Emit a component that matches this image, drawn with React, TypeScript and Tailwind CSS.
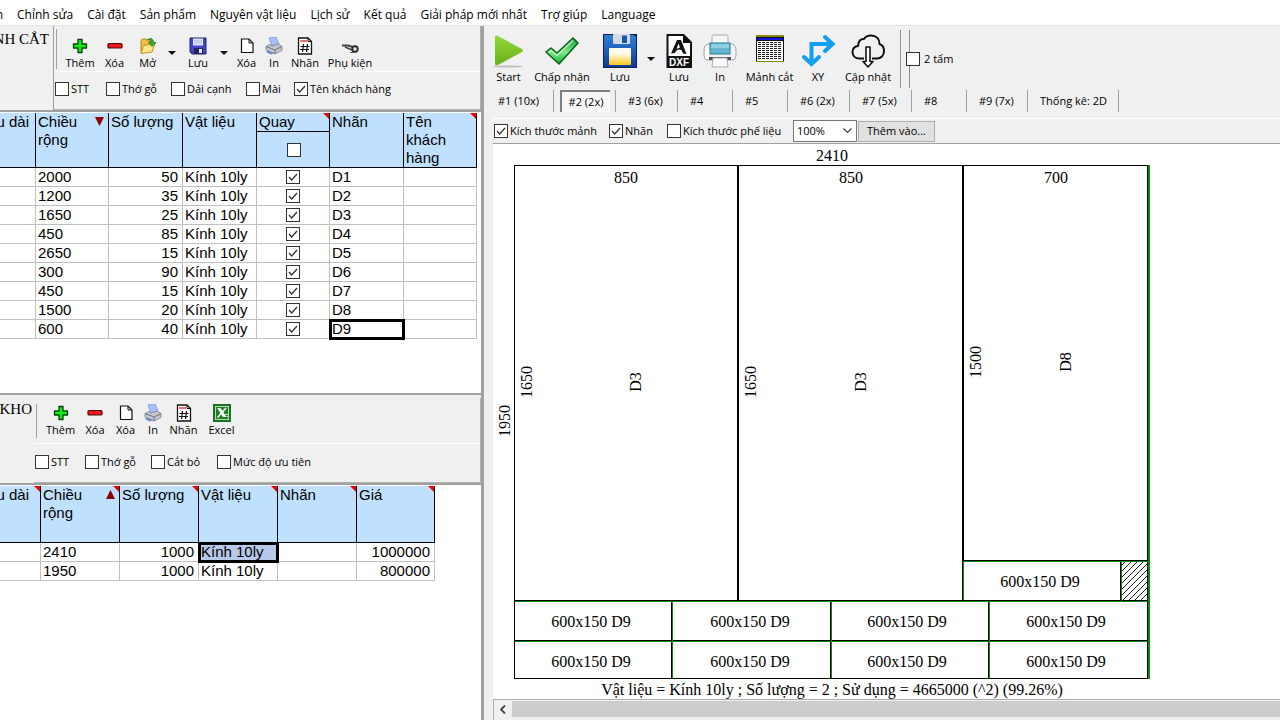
import type { ReactNode } from "react";
import { clsx } from "clsx";

const menuItems = [
  "Chỉnh sửa",
  "Cài đặt",
  "Sản phẩm",
  "Nguyên vật liệu",
  "Lịch sử",
  "Kết quả",
  "Giải pháp mới nhất",
  "Trợ giúp",
  "Language",
];

const pieces = [
  { width: 2000, count: 50, label: "D1" },
  { width: 1200, count: 35, label: "D2" },
  { width: 1650, count: 25, label: "D3" },
  { width: 450, count: 85, label: "D4" },
  { width: 2650, count: 15, label: "D5" },
  { width: 300, count: 90, label: "D6" },
  { width: 450, count: 15, label: "D7" },
  { width: 1500, count: 20, label: "D8" },
  { width: 600, count: 40, label: "D9" },
];

const stock = [
  { width: 2410, count: 1000, price: 1000000, selected: true },
  { width: 1950, count: 1000, price: 800000, selected: false },
];

const sheetTabs = [
  { text: "#1 (10x)", size: "w-[61px]" },
  { text: "#2 (2x)", size: "w-[62px]", active: true },
  { text: "#3 (6x)", size: "w-[62px]" },
  { text: "#4", size: "w-[55px]" },
  { text: "#5", size: "w-[55px]" },
  { text: "#6 (2x)", size: "w-[62px]" },
  { text: "#7 (5x)", size: "w-[62px]" },
  { text: "#8", size: "w-[55px]" },
  { text: "#9 (7x)", size: "w-[61px]" },
  { text: "Thống kê: 2D", size: "w-[91px]" },
];

/* ---------- small icons ---------- */

const PlusIcon = () => (
  <svg width="16" height="16" viewBox="0 0 16 16">
    <path d="M6 1.500h4V6h4.500v4H10v4.500H6V10H1.500V6H6z" fill="#10f010" stroke="#064006" strokeWidth="1.300" strokeLinejoin="round" />
  </svg>
);

const MinusIcon = () => (
  <svg width="16" height="16" viewBox="0 0 16 16">
    <rect x="1" y="5.500" width="14" height="4.500" rx="1" fill="#f01818" stroke="#500808" strokeWidth="1.200" />
  </svg>
);

const OpenIcon = () => (
  <svg width="18" height="18" viewBox="0 0 18 18">
    <path d="M2 15.500V4l1.500-2H7l1.500 2H14v4" fill="#f3c04a" stroke="#b98512" />
    <path d="M2 16.500 4.500 8.500 16 6l-3 9z" fill="#ffe68a" stroke="#c2901c" />
    <path d="M8.500 2.500c3.500-2 6-.5 6 3H17l-4 4-3.500-4H12c0-1.500-1-3-3.500-3z" fill="#35b02f" stroke="#1b6e1b" strokeWidth=".7" />
  </svg>
);

const FloppySmallIcon = () => (
  <svg width="18" height="18" viewBox="0 0 18 18">
    <path d="M1 1h16v16H3l-2-2z" fill="#4343c8" stroke="#22226e" />
    <rect x="4" y="1.500" width="10" height="7" fill="#dfe6fb" />
    <path d="M5 4h8M5 6h8" stroke="#a9b6e8" />
    <rect x="5" y="11" width="9" height="6" fill="#25255e" />
    <rect x="10" y="12" width="3" height="4" fill="#e3e3f2" />
  </svg>
);

const PageIcon = () => (
  <svg width="16" height="16" viewBox="0 0 16 16">
    <path d="M2.500 1h7.500l4 4v9.500H2.500z" fill="#fff" stroke="#111" strokeWidth="1.200" />
    <path d="M10 1v4h4" fill="none" stroke="#111" />
  </svg>
);

const PrinterSmallIcon = () => (
  <svg width="18" height="18" viewBox="0 0 18 18">
    <path d="m4 1 7-1 3 7-7 2z" fill="#a9bffa" stroke="#7d92d8" strokeWidth=".8" />
    <path d="m1 9.500 4-2 2 1.500 6-2 4 2.500v4l-7 3.500-9-4z" fill="#c5c8d2" stroke="#777d8d" strokeWidth=".8" />
    <path d="m1 9.500 9 3.500 7-3.500M10 13v4" fill="none" stroke="#6a7080" />
    <path d="m3 13.500 6 2.500-3 1.500-5-2.500z" fill="#6f83cb" />
    <circle cx="15" cy="11.500" r=".8" fill="#d8a820" />
  </svg>
);

const LabelIcon = () => (
  <svg width="18" height="18" viewBox="0 0 18 18">
    <path d="M2.500 1h9.500l3.500 3.500V17h-13z" fill="#fff" stroke="#111" strokeWidth="1.300" />
    <path d="M4 4h7" stroke="#e01010" strokeWidth="1.200" />
    <path d="M12 1v3.500h3.500" fill="none" stroke="#111" />
    <path d="m7.500 7-1 8M11.500 7l-1 8M4.500 9.500h9M4 12.500h9" stroke="#111" strokeWidth="1.200" />
  </svg>
);

const HingeIcon = () => (
  <svg width="18" height="18" viewBox="0 0 18 18">
    <path d="M1 8.500h6l5 1.500" fill="none" stroke="#444" strokeWidth="2" />
    <path d="m4 10 7 3" stroke="#444" strokeWidth="1.600" />
    <circle cx="14" cy="12" r="3" fill="#999" stroke="#222" strokeWidth="1.400" />
    <circle cx="14" cy="12" r="1" fill="#fff" />
    <path d="M9 15.500h4" stroke="#555" />
  </svg>
);

const ExcelIcon = () => (
  <svg width="18" height="18" viewBox="0 0 18 18">
    <rect x="1" y="1" width="16" height="16" fill="#b9d6b9" stroke="#17761c" strokeWidth="2" />
    <rect x="3" y="3" width="12" height="12" fill="#1f7f25" />
    <path d="M4 4h3.500l6 9H10z" fill="#fff" />
    <path d="M13 4 4.500 13.500" stroke="#fff" strokeWidth="1.600" />
    <path d="M12 10.500h3M13.500 12.500H15" stroke="#bfe0bf" />
  </svg>
);

const DownArrow = () => (
  <svg width="8" height="4" viewBox="0 0 8 4">
    <path d="M0 0h8L4 4z" fill="#111" />
  </svg>
);

/* ---------- large icons ---------- */

const StartIcon = () => (
  <svg width="32" height="34" viewBox="0 0 32 34">
    <defs>
      <linearGradient id="start" x1="0" y1="0" x2="0" y2="1">
        <stop offset="0" stopColor="#93d83c" />
        <stop offset="1" stopColor="#67b11a" />
      </linearGradient>
    </defs>
    <ellipse cx="15" cy="32.500" rx="15" ry="1" fill="#bdbdbd" />
    <path d="M2 2.500Q2 1 4 1.500L29 15q2 1.500 0 3L5 31q-3 1-3-1z" fill="url(#start)" />
  </svg>
);

const AcceptIcon = () => (
  <svg width="36" height="32" viewBox="0 0 36 32">
    <defs>
      <linearGradient id="accept" x1="0" y1="0" x2="0" y2="1">
        <stop offset="0" stopColor="#149c35" />
        <stop offset=".55" stopColor="#7fe98a" />
        <stop offset="1" stopColor="#12b22e" />
      </linearGradient>
    </defs>
    <path d="m2 17 5-4 6 5L29 3l5 5-19 21z" fill="url(#accept)" stroke="#0c6422" strokeWidth="1.600" strokeLinejoin="round" />
    <path d="m5 17 2-1.500 6 5L29 5.500" fill="none" stroke="#c4f5c4" strokeWidth="1.200" />
  </svg>
);

const FloppyIcon = () => (
  <svg width="34" height="34" viewBox="0 0 34 34">
    <defs>
      <linearGradient id="floppy" x1="0" y1="0" x2="0" y2="1">
        <stop offset="0" stopColor="#2f80d6" />
        <stop offset="1" stopColor="#0a3b98" />
      </linearGradient>
      <linearGradient id="paper" x1="0" y1="0" x2="0" y2="1">
        <stop offset=".3" stopColor="#fffdf2" />
        <stop offset="1" stopColor="#ffc61e" />
      </linearGradient>
    </defs>
    <path d="M0 0h34v34H0z" fill="#10204a" />
    <path d="M1 1h30l2 2v30H1z" fill="url(#floppy)" />
    <rect x="10" y="0" width="17" height="10" rx="1" fill="#d5dbe3" />
    <rect x="19" y="1.500" width="5" height="7.500" fill="#1b57ad" />
    <rect x="6" y="14" width="22" height="17" rx="1" fill="url(#paper)" />
  </svg>
);

const DxfIcon = () => (
  <svg width="26" height="34" viewBox="0 0 26 34">
    <path d="M1.500 1h16L25 8.500V33H1.500z" fill="#fff" stroke="#111" strokeWidth="2" />
    <path d="M17 0v9h9z" fill="#111" />
    <path d="M5 19.500 11 6h4l5.500 14-3.500-.5-1.500-3.500c-3-1.500-5.500 0-6.500 3z" fill="#111" />
    <path d="m12.500 9.500 1.500 4-3.500 1.500z" fill="#fff" />
    <rect x="1" y="22" width="24" height="12" fill="#111" />
    <text x="13" y="32" textAnchor="middle" fontFamily="Liberation Sans, sans-serif" fontWeight="700" fontSize="10" fill="#fff">DXF</text>
  </svg>
);

const PrinterIcon = () => (
  <svg width="34" height="34" viewBox="0 0 34 34">
    <rect x="9" y="1" width="16" height="10" rx="1" fill="#f7f7f7" stroke="#a9abb0" />
    <path d="M5 10h24q4 1 4 7v5q0 3-3 4H4q-3-1-3-4v-5q0-6 4-7z" fill="#eff1f3" stroke="#a3a6ac" />
    <path d="M4.500 11Q2 13 2 18v4q0 2 2 3h2V11z" fill="#fff" />
    <rect x="7" y="9" width="20" height="11" fill="#62b5cd" stroke="#2c7f99" />
    <path d="M8 10h18v4H8z" fill="#8fd0e0" />
    <path d="M6 24.500h22" stroke="#4a4e55" strokeWidth="3" />
    <path d="M10 24h14l1 9H9z" fill="#fafafa" stroke="#a9abb0" />
  </svg>
);

const GridIcon = () => (
  <svg width="28" height="34" viewBox="0 0 28 34">
    <rect x="0" y="1" width="28" height="27" fill="#111" />
    <rect x="0" y="1" width="28" height="2" fill="#8b8b10" />
    <rect x="1" y="4" width="26" height="2" fill="#1616e0" />
    <rect x="1" y="7" width="26" height="20" fill="#fff" />
    <path
      d="M2 8.500h24M2 10.500h24M2 12.500h24M2 14.500h24M2 16.500h24M2 18.500h24M2 20.500h24M2 22.500h24M2 24.500h24"
      stroke="#222"
      strokeDasharray="3 1"
    />
    <path d="M0 27.500h28" stroke="#8b8b10" />
  </svg>
);

const AxesIcon = () => (
  <svg width="34" height="34" viewBox="0 0 34 34" fill="none" stroke="#0f9fee" strokeWidth="4">
    <path d="M10.500 29V10H31" />
    <path d="m24 3 7.500 7-7.500 7M3 23l7.500 7 7.500-7" strokeLinecap="round" />
  </svg>
);

const CloudIcon = () => (
  <svg width="34" height="34" viewBox="0 0 34 34" strokeLinejoin="round">
    <path
      d="M13 24.500H8.500C4 24.500 1.500 21.500 1.500 18s2.500-5.500 5.500-6C7 7 10 4.500 13 5c1.500-2.500 4-3.500 7-3.500C25.500 1.500 28.500 5 28.500 10c3 1 4.500 3.500 4.500 7 0 4.500-3 7.500-7 7.500h-5"
      fill="none"
      stroke="#111"
      strokeWidth="2"
    />
    <path d="M15 13h4v14.500h3L17 33l-5-5.500h3z" fill="#fff" stroke="#111" strokeWidth="1.600" />
  </svg>
);

/* ---------- controls ---------- */

function CheckMark() {
  return (
    <svg className="pointer-events-none absolute inset-0" width="14" height="14" viewBox="0 0 14 14">
      <path d="m3 7 2.700 3L11 4" fill="none" stroke="#333" strokeWidth="1.300" />
    </svg>
  );
}

function Tick({ checked = false, label }: { checked?: boolean; label?: string }) {
  return (
    <span className="relative block size-[14px] shrink-0">
      <input
        type="checkbox"
        defaultChecked={checked}
        aria-label={label}
        className="block size-[14px] appearance-none border border-[#333] bg-white"
      />
      {checked && <CheckMark />}
    </span>
  );
}

function Check({ children, checked, className }: { children: ReactNode; checked?: boolean; className?: string }) {
  return (
    <label className={clsx("flex shrink-0 items-center gap-[2px] whitespace-nowrap", className)}>
      <Tick checked={checked} />
      {children}
    </label>
  );
}

function ToolButton({ icon, text, size, large }: { icon: ReactNode; text: string; size: string; large?: boolean }) {
  return (
    <button className={clsx("flex shrink-0 flex-col items-center whitespace-nowrap", size)}>
      <span className={clsx("flex items-center justify-center", large ? "h-[34px]" : "h-[18px]")}>{icon}</span>
      <span className={large ? "mt-px" : ""}>{text}</span>
    </button>
  );
}

function DropButton({ label, size, large }: { label: string; size: string; large?: boolean }) {
  return (
    <button aria-label={label} className={clsx("flex shrink-0 justify-center", size, large ? "pt-[23px]" : "pt-[14px]")}>
      <DownArrow />
    </button>
  );
}

function HeadCell({ children, corner, sort }: { children?: ReactNode; corner?: boolean; sort?: "up" | "down" }) {
  return (
    <th className="relative border-r border-b border-black bg-[#c0e0ff] p-0 pl-[2px] text-left align-top font-normal">
      {children}
      {corner && (
        <svg className="absolute top-0 right-0" width="6" height="6" viewBox="0 0 6 6">
          <path d="M0 0h6v6z" fill="#f00000" />
        </svg>
      )}
      {sort && (
        <svg className="absolute top-1 right-1" width="9" height="9" viewBox="0 0 9 9">
          <path d={sort === "up" ? "M0 9h9L4.500 0z" : "M0 0h9L4.500 9z"} fill="#8b0000" />
        </svg>
      )}
    </th>
  );
}

const cell = "h-[19px] border-r border-b border-[#c0c0c0] p-0 px-[2px] whitespace-nowrap";

function PiecesTable() {
  return (
    <table className="w-[477px] table-fixed border-separate border-spacing-0 font-['Liberation_Sans',sans-serif] text-[15px] leading-[18px]">
      <colgroup>
        <col className="w-[36px]" />
        <col className="w-[73px]" />
        <col className="w-[74px]" />
        <col className="w-[74px]" />
        <col className="w-[73px]" />
        <col className="w-[74px]" />
        <col className="w-[73px]" />
      </colgroup>
      <thead>
        <tr className="h-[55px]">
          <HeadCell>
            <span className="-ml-[2px] flex w-[29px] justify-end overflow-hidden whitespace-nowrap">u dài</span>
          </HeadCell>
          <HeadCell sort="down">Chiều<br />rộng</HeadCell>
          <HeadCell>Số lượng</HeadCell>
          <HeadCell>Vật liệu</HeadCell>
          <HeadCell corner>
            <div className="-ml-[2px] border-b border-black pl-[2px]">Quay</div>
            <div className="flex h-[35px] items-center justify-center">
              <Tick label="Quay tất cả" />
            </div>
          </HeadCell>
          <HeadCell>Nhãn</HeadCell>
          <HeadCell corner>
            <div className="h-[54px] overflow-hidden">Tên<br />khách<br />hàng</div>
          </HeadCell>
        </tr>
      </thead>
      <tbody>
        {pieces.map((piece) => (
          <tr key={piece.label}>
            <td className={cell} />
            <td className={cell}>{piece.width}</td>
            <td className={clsx(cell, "pr-1 text-right")}>{piece.count}</td>
            <td className={cell}>Kính 10ly</td>
            <td className={cell}>
              <div className="flex justify-center">
                <Tick checked label={`Quay ${piece.label}`} />
              </div>
            </td>
            <td className={clsx(cell, piece.label === "D9" && "outline-3 -outline-offset-2 outline-black")}>{piece.label}</td>
            <td className={cell} />
          </tr>
        ))}
      </tbody>
    </table>
  );
}

function StockTable() {
  return (
    <table className="w-[435px] table-fixed border-separate border-spacing-0 font-['Liberation_Sans',sans-serif] text-[15px] leading-[18px]">
      <colgroup>
        <col className="w-[41px]" />
        <col className="w-[79px]" />
        <col className="w-[79px]" />
        <col className="w-[79px]" />
        <col className="w-[79px]" />
        <col className="w-[78px]" />
      </colgroup>
      <thead>
        <tr className="h-[57px]">
          <HeadCell corner>
            <span className="-ml-[2px] flex w-[29px] justify-end overflow-hidden whitespace-nowrap">u dài</span>
          </HeadCell>
          <HeadCell sort="up" corner>Chiều<br />rộng</HeadCell>
          <HeadCell corner>Số lượng</HeadCell>
          <HeadCell corner>Vật liệu</HeadCell>
          <HeadCell corner>Nhãn</HeadCell>
          <HeadCell corner>Giá</HeadCell>
        </tr>
      </thead>
      <tbody>
        {stock.map((row) => (
          <tr key={row.width}>
            <td className={cell} />
            <td className={cell}>{row.width}</td>
            <td className={clsx(cell, "pr-1 text-right")}>{row.count}</td>
            <td className={clsx(cell, row.selected && "bg-[#b8c8e8] outline-3 -outline-offset-2 outline-black")}>Kính 10ly</td>
            <td className={cell} />
            <td className={clsx(cell, "pr-1 text-right")}>{row.price}</td>
          </tr>
        ))}
      </tbody>
    </table>
  );
}

/* ---------- cutting plan ---------- */

const stripCells = [
  { x: 98, y: 483 },
  { x: 257, y: 483 },
  { x: 414, y: 483 },
  { x: 573, y: 483 },
  { x: 98, y: 523 },
  { x: 257, y: 523 },
  { x: 414, y: 523 },
  { x: 573, y: 523 },
  { x: 547, y: 443 },
];

const sideTexts = [
  { x: 17, y: 277, text: "1950" },
  { x: 39, y: 238, text: "1650" },
  { x: 263, y: 238, text: "1650" },
  { x: 488, y: 218, text: "1500" },
  { x: 148, y: 238, text: "D3" },
  { x: 373, y: 238, text: "D3" },
  { x: 578, y: 218, text: "D8" },
];

function CuttingPlan() {
  return (
    <svg width="700" height="555" viewBox="0 0 700 555" className="block" fontFamily="Liberation Serif, serif" fontSize="16" textAnchor="middle">
      <defs>
        <pattern id="waste" width="6" height="6" patternUnits="userSpaceOnUse">
          <path d="M-1 7 7-1M-1 1l2-2M5 7l2-2" stroke="#222" strokeWidth="1" />
        </pattern>
      </defs>
      <rect x="628" y="417" width="27" height="40" fill="url(#waste)" />
      <g fill="#000" shapeRendering="crispEdges">
        <rect x="21" y="21" width="636" height="1" />
        <rect x="21" y="21" width="1" height="514" />
        <rect x="21" y="534" width="636" height="1" />
        <rect x="654" y="21" width="1" height="514" />
        <rect x="244" y="21" width="2" height="435" />
        <rect x="469" y="21" width="2" height="435" />
        <rect x="21" y="456" width="634" height="1" />
        <rect x="21" y="496" width="634" height="1" />
        <rect x="471" y="416" width="184" height="1" />
        <rect x="627" y="416" width="1" height="40" />
        <rect x="178" y="457" width="1" height="78" />
        <rect x="337" y="457" width="1" height="78" />
        <rect x="495" y="457" width="1" height="78" />
      </g>
      <g fill="#0a8a0a" shapeRendering="crispEdges">
        <rect x="655" y="21" width="2" height="514" />
        <rect x="22" y="457" width="633" height="1" />
        <rect x="22" y="497" width="633" height="1" />
        <rect x="471" y="417" width="184" height="1" />
        <rect x="470" y="417" width="1" height="39" />
        <rect x="628" y="417" width="1" height="40" />
        <rect x="179" y="457" width="1" height="77" />
        <rect x="338" y="457" width="1" height="77" />
        <rect x="496" y="457" width="1" height="77" />
      </g>
      <text x="339" y="17">2410</text>
      <text x="133" y="39">850</text>
      <text x="358" y="39">850</text>
      <text x="563" y="39">700</text>
      {sideTexts.map((t) => (
        <text key={`${t.text}-${t.x}`} transform={`translate(${t.x} ${t.y}) rotate(-90)`}>{t.text}</text>
      ))}
      {stripCells.map((c) => (
        <text key={`${c.x}-${c.y}`} x={c.x} y={c.y}>600x150 D9</text>
      ))}
      <text x="339" y="551">Vật liệu = Kính 10ly ; Số lượng = 2 ; Sử dụng = 4665000 (^2) (99.26%)</text>
    </svg>
  );
}

function LeftPane() {
  return (
    <section className="flex w-[481px] shrink-0 flex-col overflow-hidden">
      <div className="flex h-[86px] border-b-2 border-[#a0a0a0]">
        <h2 className="flex w-[54px] shrink-0 justify-end overflow-hidden border-r border-[#a0a0a0] pt-1 pr-1 font-['Liberation_Serif',serif] text-[15px] leading-[18px] whitespace-nowrap">
          NH CẮT
        </h2>
        <div className="flex min-w-0 flex-1 flex-col border-r border-b border-[#b0b0b0]">
          <div className="flex h-[46px] border-b border-white pt-[11px]">
            <span className="-mt-2 mr-[6px] ml-[2px] h-[40px] w-px shrink-0 bg-[#a0a0a0]" />
            <ToolButton icon={<PlusIcon />} text="Thêm" size="w-[34px]" />
            <ToolButton icon={<MinusIcon />} text="Xóa" size="w-[35px]" />
            <ToolButton icon={<OpenIcon />} text="Mở" size="w-[31px]" />
            <DropButton label="Mở gần đây" size="w-[18px]" />
            <ToolButton icon={<FloppySmallIcon />} text="Lưu" size="w-[34px]" />
            <DropButton label="Kiểu lưu" size="w-[18px]" />
            <ToolButton icon={<PageIcon />} text="Xóa" size="w-[27px]" />
            <ToolButton icon={<PrinterSmallIcon />} text="In" size="w-[28px]" />
            <ToolButton icon={<LabelIcon />} text="Nhãn" size="w-[34px]" />
            <ToolButton icon={<HingeIcon />} text="Phụ kiện" size="w-[56px]" />
          </div>
          <div className="flex flex-1 items-center pb-[3px] pl-px">
            <Check className="w-[51px]">STT</Check>
            <Check className="w-[65px]">Thớ gỗ</Check>
            <Check className="w-[75px]">Dải cạnh</Check>
            <Check className="w-[48px]">Mài</Check>
            <Check checked>Tên khách hàng</Check>
          </div>
        </div>
      </div>
      <div className="h-[281px] bg-white pt-px">
        <PiecesTable />
      </div>
      <div className="h-[5px] border-t-2 border-[#a0a0a0]" />
      <div className="flex h-[87px] border-b-2 border-[#a0a0a0]">
        <h2 className="flex w-[34px] shrink-0 justify-end overflow-hidden pt-[2px] pr-[2px] font-['Liberation_Serif',serif] text-[15px] leading-[18px] whitespace-nowrap">
          KHO
        </h2>
        <div className="flex min-w-0 flex-1 flex-col border-r border-b border-[#b0b0b0]">
          <div className="flex h-[46px] border-b border-white pt-[6px]">
            <span className="mr-[6px] ml-[2px] h-[34px] w-px shrink-0 bg-[#a0a0a0]" />
            <ToolButton icon={<PlusIcon />} text="Thêm" size="w-[35px]" />
            <ToolButton icon={<MinusIcon />} text="Xóa" size="w-[34px]" />
            <ToolButton icon={<PageIcon />} text="Xóa" size="w-[27px]" />
            <ToolButton icon={<PrinterSmallIcon />} text="In" size="w-[28px]" />
            <ToolButton icon={<LabelIcon />} text="Nhãn" size="w-[33px]" />
            <ToolButton icon={<ExcelIcon />} text="Excel" size="w-[43px]" />
          </div>
          <div className="flex flex-1 items-center pb-[3px] pl-px">
            <Check className="w-[50px]">STT</Check>
            <Check className="w-[66px]">Thớ gỗ</Check>
            <Check className="w-[66px]">Cắt bỏ</Check>
            <Check>Mức độ ưu tiên</Check>
          </div>
        </div>
      </div>
      <div className="min-h-0 flex-1 bg-white pt-px">
        <StockTable />
      </div>
    </section>
  );
}

function RightPane() {
  return (
    <section className="flex min-w-0 flex-1 flex-col">
      <div className="flex h-[62px] shrink-0 pt-2">
        <ToolButton large icon={<StartIcon />} text="Start" size="w-[31px]" />
        <ToolButton large icon={<AcceptIcon />} text="Chấp nhận" size="w-[76px]" />
        <ToolButton large icon={<FloppyIcon />} text="Lưu" size="w-[40px]" />
        <DropButton large label="Kiểu lưu" size="w-[22px]" />
        <ToolButton large icon={<DxfIcon />} text="Lưu" size="w-[34px]" />
        <ToolButton large icon={<PrinterIcon />} text="In" size="w-[48px]" />
        <ToolButton large icon={<GridIcon />} text="Mảnh cắt" size="w-[51px]" />
        <ToolButton large icon={<AxesIcon />} text="XY" size="w-[46px]" />
        <ToolButton large icon={<CloudIcon />} text="Cập nhật" size="w-[54px]" />
        <span className="-mt-1 ml-[5px] w-px shrink-0 bg-[#909090]" />
        <div className="relative -mt-1 ml-[5px] flex items-center">
          <span className="absolute inset-y-0 left-[3px] w-px bg-[#909090]" />
          <Check className="relative gap-[4px]">2 tấm</Check>
        </div>
      </div>
      <nav className="flex h-[30px] shrink-0 items-start pt-[2px]">
        {sheetTabs.map((tab) => (
          <div key={tab.text} className={clsx("flex h-[22px] shrink-0 border-r border-[#a0a0a0]", tab.size)}>
            {tab.active ? (
              <button className="ml-[6px] w-[50px] border-t-2 border-l-2 border-[#808080] bg-[#f8f8f8] whitespace-nowrap">{tab.text}</button>
            ) : (
              <button className={clsx("whitespace-nowrap", tab.text === "#1 (10x)" ? "pl-[5px]" : "pl-3")}>{tab.text}</button>
            )}
          </div>
        ))}
      </nav>
      <div className="flex h-[26px] shrink-0 items-center border-t border-b border-t-white border-b-[#a0a0a0] pl-px">
        <Check checked className="w-[115px]">Kích thước mảnh</Check>
        <Check checked className="w-[58px]">Nhãn</Check>
        <Check className="w-[126px]">Kích thước phế liệu</Check>
        <div className="relative">
          <select aria-label="Thu phóng" defaultValue="100%" className="block h-[22px] w-[64px] appearance-none border border-[#777] bg-white pl-[3px]">
            <option>100%</option>
            <option>200%</option>
          </select>
          <svg className="pointer-events-none absolute top-2 right-[5px]" width="9" height="6" viewBox="0 0 9 6">
            <path d="m.5.5 4 4 4-4" fill="none" stroke="#444" strokeWidth="1.200" />
          </svg>
        </div>
        <button className="ml-px h-[21px] w-[77px] border border-[#adadad] bg-[#e1e1e1] whitespace-nowrap">Thêm vào...</button>
      </div>
      <div className="min-h-0 flex-1 overflow-hidden bg-white">
        <CuttingPlan />
      </div>
      <div className="flex h-[21px] shrink-0 border-t border-l border-[#b0b0b0] pt-px pb-[3px]">
        <button aria-label="Cuộn trái" className="flex w-[18px] items-center justify-center">
          <svg width="6" height="9" viewBox="0 0 6 9">
            <path d="m5 .5-4 4 4 4" fill="none" stroke="#444" strokeWidth="1.800" />
          </svg>
        </button>
        <div className="flex-1 bg-[#cdcdcd]" />
      </div>
    </section>
  );
}

export default function App() {
  return (
    <div className="flex h-screen flex-col overflow-hidden bg-[#f0f0f0] font-['Open_Sans',sans-serif] text-[11px] leading-[16px] text-black">
      <nav className="flex h-[26px] shrink-0 items-center gap-[14px] border-b border-[#e4e4e4] bg-white pt-1 text-[12px]">
        <button className="flex w-[3px] justify-end overflow-hidden">n</button>
        {menuItems.map((item) => (
          <button key={item} className="shrink-0 whitespace-nowrap">{item}</button>
        ))}
      </nav>
      <main className="flex min-h-0 flex-1">
        <LeftPane />
        <div className="mr-[9px] w-[3px] shrink-0 bg-[#a0a0a0]" />
        <RightPane />
      </main>
    </div>
  );
}
